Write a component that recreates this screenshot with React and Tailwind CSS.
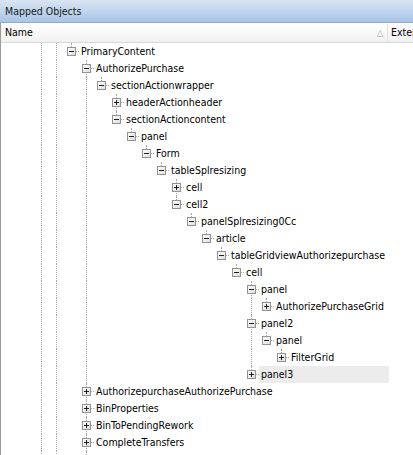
import React from 'react';

// flat tree: [level, label, expanded, hot]
const rows = [
  [0, 'PrimaryContent', true],
  [1, 'AuthorizePurchase', true],
  [2, 'sectionActionwrapper', true],
  [3, 'headerActionheader', false],
  [3, 'sectionActioncontent', true],
  [4, 'panel', true],
  [5, 'Form', true],
  [6, 'tableSplresizing', true],
  [7, 'cell', false],
  [7, 'cell2', true],
  [8, 'panelSplresizing0Cc', true],
  [9, 'article', true],
  [10, 'tableGridviewAuthorizepurchase', true],
  [11, 'cell', true],
  [12, 'panel', true],
  [13, 'AuthorizePurchaseGrid', false],
  [12, 'panel2', true],
  [13, 'panel', true],
  [14, 'FilterGrid', false],
  [12, 'panel3', false, true],
  [1, 'AuthorizepurchaseAuthorizePurchase', false],
  [1, 'BinProperties', false],
  [1, 'BinToPendingRework', false],
  [1, 'CompleteTransfers', false],
  [1, 'ConfirmTransferAuthorize', false],
];

// does row i have a later sibling at the same level?
function hasNext(i) {
  const lvl = rows[i][0];
  for (let j = i + 1; j < rows.length; j++) {
    if (rows[j][0] < lvl) return false;
    if (rows[j][0] === lvl) return true;
  }
  // the level-1 list keeps going past the bottom of the view
  return lvl === 1;
}

const nexts = rows.map((_, i) => hasNext(i));

// levels whose ancestor line runs through row i
function openLevels(i) {
  const lvl = rows[i][0];
  const open = new Set([-2, -1]);
  let want = lvl - 1;
  for (let j = i - 1; j >= 0 && want >= 0; j--) {
    if (rows[j][0] === want) {
      if (nexts[j]) open.add(want);
      want--;
    }
  }
  return open;
}

function Box({ expanded }) {
  return (
    <svg width="9" height="9" viewBox="0 0 9 9" className="block">
      <defs>
        <linearGradient id="bx" x1="0" y1="0" x2="1" y2="1">
          <stop offset="0" stopColor="#ffffff" />
          <stop offset="1" stopColor="#dcdcdc" />
        </linearGradient>
      </defs>
      <rect x="0.5" y="0.5" width="8" height="8" fill="url(#bx)" stroke="#939393" />
      <path d="M2 4.5H7" stroke="#1e1e1e" />
      {!expanded && <path d="M4.5 2V7" stroke="#1e1e1e" />}
    </svg>
  );
}

function Row({ i }) {
  const [lvl, label, expanded, hot] = rows[i];
  const open = openLevels(i);
  const cols = [];
  for (let l = -2; l < lvl; l++) {
    cols.push(
      <div key={l} className="w-[15px] h-full shrink-0">
        {open.has(l) && <div className="w-[8px] h-full border-r border-dotted border-[#a8a8a8]" />}
      </div>
    );
  }
  return (
    <div className="flex h-[17px] items-stretch">
      <div className="w-[33px] shrink-0" />
      {cols}
      <div className="relative w-[15px] h-full shrink-0">
        <div className="absolute left-0 top-0 w-[8px] h-[8px] border-r border-dotted border-[#a8a8a8]" />
        {nexts[i] && (
          <div className="absolute left-0 top-[8px] w-[8px] h-[9px] border-r border-dotted border-[#a8a8a8]" />
        )}
        <div className="absolute left-[12px] top-[8px] w-[3px] border-t border-dotted border-[#a8a8a8]" />
        <div className="absolute left-[3px] top-[4px]">
          <Box expanded={expanded} />
        </div>
      </div>
      <div
        className={
          'pl-[2px] leading-[17px] whitespace-nowrap ' +
          (hot ? 'bg-[#ececec] w-[130px]' : '')
        }
      >
        {label}
      </div>
    </div>
  );
}

export default function App() {
  return (
    <div
      className="w-[413px] h-[455px] overflow-hidden bg-white text-[10.5px] text-black"
      style={{ fontFamily: 'Tahoma, "DejaVu Sans Condensed", "DejaVu Sans", sans-serif' }}
    >
      <div className="h-[23px] flex items-center pl-[5px] pt-[2px] bg-gradient-to-b from-[#d9e5f4] to-[#a9c4e6] border-b border-[#8fa9c9] text-[#1a1a1a]">
        Mapped Objects
      </div>
      <div className="border-l border-[#9a9a9a] h-full">
        <div className="h-[20px] flex items-center pt-[1px] bg-gradient-to-b from-white to-[#f1f1f1] border-b border-[#d8d8d8]">
          <div className="flex-1 pl-[4px]">Name</div>
          <div className="w-[10px] text-[9px] text-[#a0a0a0] leading-none">△</div>
          <div className="h-full border-l border-[#e2e2e2] pl-[3px] flex items-center w-[26px] overflow-hidden whitespace-nowrap">
            Extended
          </div>
        </div>
        <div>
          {rows.map((_, i) => (
            <Row key={i} i={i} />
          ))}
        </div>
      </div>
    </div>
  );
}
